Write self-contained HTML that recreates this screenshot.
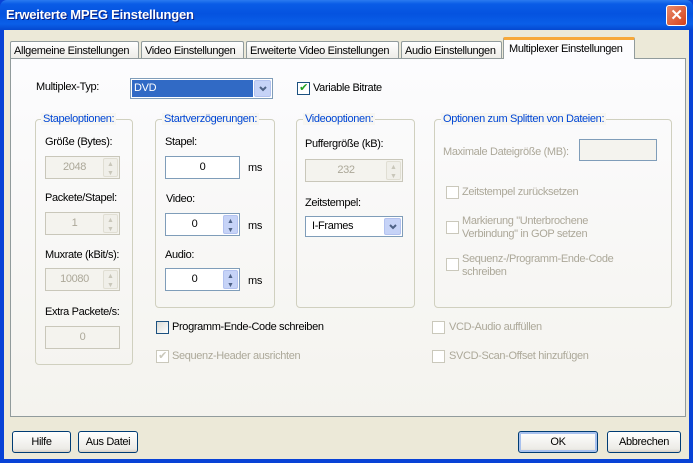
<!DOCTYPE html>
<html><head><meta charset="utf-8"><style>
*{margin:0;padding:0;box-sizing:border-box}
body{width:693px;height:463px;overflow:hidden;background:#0842d6;font-family:"Liberation Sans",sans-serif;font-size:11px;letter-spacing:-0.35px;color:#000;position:relative}
.a{position:absolute}
#title{left:0;top:0;width:693px;height:30px;background:linear-gradient(#2b7bf0 0,#0a5ce6 4px,#0553e0 14px,#0a5fe8 24px,#0548d0 30px);border-radius:7px 7px 0 0}
#title span{position:absolute;left:6px;top:7px;color:#fff;font-weight:bold;font-size:13px;letter-spacing:-0.2px;text-shadow:1px 1px #0a1f80}
#close{left:666px;top:5px;width:21px;height:21px;background:linear-gradient(135deg,#e88a6a,#d4411c);border:1px solid #fff;border-radius:3px;color:#fff;font-weight:bold;font-size:15px;text-align:center;line-height:19px}
#client{left:4px;top:30px;width:685px;height:429px;background:#ece9d8}
.tab{top:41px;height:18px;border:1px solid #919b9c;border-bottom:none;background:linear-gradient(#fff,#ecebe6);padding:3px 0 0 3px;white-space:nowrap;border-radius:2px 2px 0 0;overflow:hidden}
#panel{left:10px;top:58px;width:676px;height:359px;border:1px solid #919b9c;background:linear-gradient(#fcfcfe 0,#f4f3ee 100%)}
.grp{border:1px solid #d0d0bf;border-radius:4px}
.lg{color:#0046d5;background:#f7f6f2;padding:0 2px;white-space:nowrap}
.gr{color:#aca899}
.in{background:#fff;border:1px solid #7f9db9;text-align:center;line-height:21px}
.dis{background:#f4f3ee;border:1px solid #c9c7ba;color:#aca899;text-align:center;line-height:21px}
.sp,.spd{position:absolute;right:1px;top:1px;bottom:1px;width:15px;border-radius:2px;font-size:7px;line-height:9px;text-align:center;letter-spacing:0;padding-top:1px}
.sp{background:#c6d3f7;border:1px solid #b3c2ef;color:#4d6185}
.spd{background:#f0efe9;border:1px solid #e0ded3;color:#c9c7ba}
.sp i,.spd i{display:block;font-style:normal}
.cb{width:13px;height:13px;border:1px solid #1c5180;background:linear-gradient(135deg,#dcdcd7,#fff)}
.cbd{width:13px;height:13px;border:1px solid #cac8bb;background:#fff}
.btn{top:431px;height:22px;border:1px solid #003c74;border-radius:3px;background:linear-gradient(#fff,#ecebe6 85%,#d6d0c5);text-align:center;line-height:20px}
.arr{position:absolute;right:1px;top:1px;bottom:1px;width:17px;background:#c6d3f7;border:1px solid #b3c2ef;border-radius:2px}
.arr svg{position:absolute;left:4px;top:5px}
</style></head><body>
<div id="title" class="a"><span>Erweiterte MPEG Einstellungen</span></div>
<div id="close" class="a">✕</div>
<div id="client" class="a"></div>
<div class="a tab" style="left:10px;width:129px">Allgemeine Einstellungen</div>
<div class="a tab" style="left:141px;width:103px">Video Einstellungen</div>
<div class="a tab" style="left:246px;width:153px">Erweiterte Video Einstellungen</div>
<div class="a tab" style="left:401px;width:101px">Audio Einstellungen</div>
<div id="panel" class="a"></div>
<div class="a tab" style="left:503px;top:37px;height:22px;width:132px;background:#fcfcfe;border-top:3px solid #f7a83a;border-bottom:none;padding-left:5px">Multiplexer Einstellungen</div>

<div class="a" style="left:36px;top:81px">Multiplex-Typ:</div>
<div class="a" style="left:130px;top:78px;width:143px;height:21px;border:1px solid #7f9db9;background:#fff">
 <div class="a" style="left:1px;top:1px;width:121px;height:17px;background:#316ac5;color:#fff;padding-left:2px;line-height:17px">DVD</div>
 <div class="arr"><svg width="8" height="6"><path d="M1 1L4 4L7 1" stroke="#4d6185" stroke-width="2" fill="none"/></svg></div></div>
<div class="a cb" style="left:297px;top:82px;background:#fff;color:#21a121;font-size:11px;line-height:11px;text-align:center">✔</div>
<div class="a" style="left:313px;top:82px">Variable Bitrate</div>

<div class="a grp" style="left:35px;top:119px;width:98px;height:246px"></div>
<div class="a lg" style="left:41px;top:113px">Stapeloptionen:</div>
<div class="a" style="left:45px;top:136px">Größe (Bytes):</div>
<div class="a dis" style="left:45px;top:156px;width:75px;height:23px;padding-right:16px">2048<div class="spd"><i>▲</i><i>▼</i></div></div>
<div class="a" style="left:45px;top:192px">Packete/Stapel:</div>
<div class="a dis" style="left:45px;top:212px;width:75px;height:23px;padding-right:16px">1<div class="spd"><i>▲</i><i>▼</i></div></div>
<div class="a" style="left:45px;top:249px">Muxrate (kBit/s):</div>
<div class="a dis" style="left:45px;top:268px;width:75px;height:23px;padding-right:16px">10080<div class="spd"><i>▲</i><i>▼</i></div></div>
<div class="a" style="left:45px;top:306px">Extra Packete/s:</div>
<div class="a dis" style="left:45px;top:326px;width:75px;height:23px">0</div>

<div class="a grp" style="left:155px;top:119px;width:120px;height:189px"></div>
<div class="a lg" style="left:162px;top:113px">Startverzögerungen:</div>
<div class="a" style="left:165px;top:136px">Stapel:</div>
<div class="a in" style="left:165px;top:156px;width:75px;height:23px">0</div>
<div class="a" style="left:248px;top:162px">ms</div>
<div class="a" style="left:166px;top:193px">Video:</div>
<div class="a in" style="left:165px;top:213px;width:75px;height:23px;padding-right:16px">0<div class="sp"><i>▲</i><i>▼</i></div></div>
<div class="a" style="left:248px;top:220px">ms</div>
<div class="a" style="left:165px;top:249px">Audio:</div>
<div class="a in" style="left:165px;top:268px;width:75px;height:23px;padding-right:16px">0<div class="sp"><i>▲</i><i>▼</i></div></div>
<div class="a" style="left:248px;top:275px">ms</div>

<div class="a grp" style="left:296px;top:119px;width:119px;height:189px"></div>
<div class="a lg" style="left:303px;top:113px">Videooptionen:</div>
<div class="a" style="left:305px;top:138px">Puffergröße (kB):</div>
<div class="a dis" style="left:305px;top:159px;width:98px;height:23px;padding-right:16px">232<div class="spd"><i>▲</i><i>▼</i></div></div>
<div class="a" style="left:305px;top:197px">Zeitstempel:</div>
<div class="a" style="left:305px;top:216px;width:98px;height:21px;border:1px solid #7f9db9;background:#fff;padding-left:6px;line-height:19px">I-Frames<div class="arr"><svg width="8" height="6"><path d="M1 1L4 4L7 1" stroke="#4d6185" stroke-width="2" fill="none"/></svg></div></div>

<div class="a grp" style="left:434px;top:119px;width:238px;height:189px"></div>
<div class="a lg" style="left:441px;top:113px">Optionen zum Splitten von Dateien:</div>
<div class="a gr" style="left:443px;top:146px">Maximale Dateigröße (MB):</div>
<div class="a" style="left:579px;top:139px;width:78px;height:22px;border:1px solid #7f9db9;background:#f4f3ee"></div>
<div class="a cbd" style="left:446px;top:186px"></div>
<div class="a gr" style="left:462px;top:186px">Zeitstempel zurücksetzen</div>
<div class="a cbd" style="left:446px;top:221px"></div>
<div class="a gr" style="left:462px;top:215px;line-height:13px">Markierung "Unterbrochene<br>Verbindung" in GOP setzen</div>
<div class="a cbd" style="left:446px;top:258px"></div>
<div class="a gr" style="left:462px;top:253px;line-height:13px">Sequenz-/Programm-Ende-Code<br>schreiben</div>

<div class="a cb" style="left:156px;top:321px"></div>
<div class="a" style="left:172px;top:321px">Programm-Ende-Code schreiben</div>
<div class="a cbd" style="left:156px;top:350px;color:#cac8bb;font-size:11px;line-height:11px;text-align:center">✔</div>
<div class="a gr" style="left:172px;top:350px">Sequenz-Header ausrichten</div>
<div class="a cbd" style="left:432px;top:321px"></div>
<div class="a gr" style="left:449px;top:321px">VCD-Audio auffüllen</div>
<div class="a cbd" style="left:432px;top:350px"></div>
<div class="a gr" style="left:449px;top:350px">SVCD-Scan-Offset hinzufügen</div>

<div class="a btn" style="left:12px;width:59px">Hilfe</div>
<div class="a btn" style="left:78px;width:60px">Aus Datei</div>
<div class="a btn" style="left:518px;width:80px;box-shadow:inset 0 0 0 2px #a8c1ee">OK</div>
<div class="a btn" style="left:607px;width:74px">Abbrechen</div>
</body></html>
